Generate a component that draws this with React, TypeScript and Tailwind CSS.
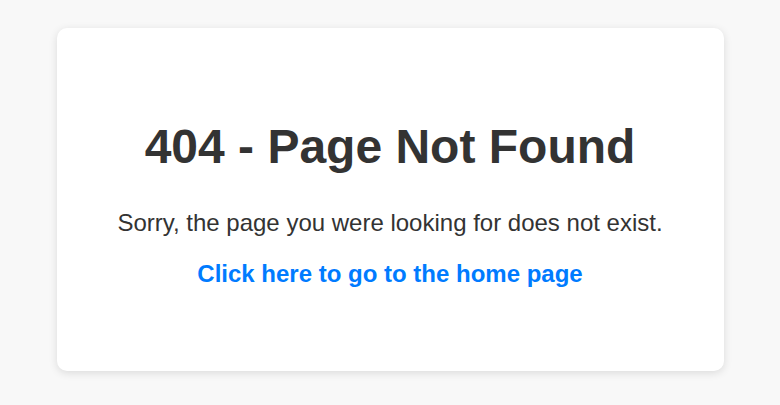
export default function App() {
  return (
    <div className="min-h-screen bg-[#f8f8f8] pt-[28px] font-['Liberation_Sans',Arial,sans-serif] text-[#333]">
      {/* Not-found card */}
      <div className="mx-auto w-[667px] rounded-[10px] bg-white pt-[91px] pb-[83px] text-center shadow-[0_2px_8px_rgba(0,0,0,0.12)]">
        <h1 className="text-[48px] leading-[55px] font-bold">404 - Page Not Found</h1>
        <p className="mt-[35px] text-[24px] leading-[28px]">
          Sorry, the page you were looking for does not exist.
        </p>
        <a href="#" className="mt-[23px] block text-[24px] leading-[28px] font-bold text-[#007bff] no-underline">
          Click here to go to the home page
        </a>
      </div>
    </div>
  );
}
